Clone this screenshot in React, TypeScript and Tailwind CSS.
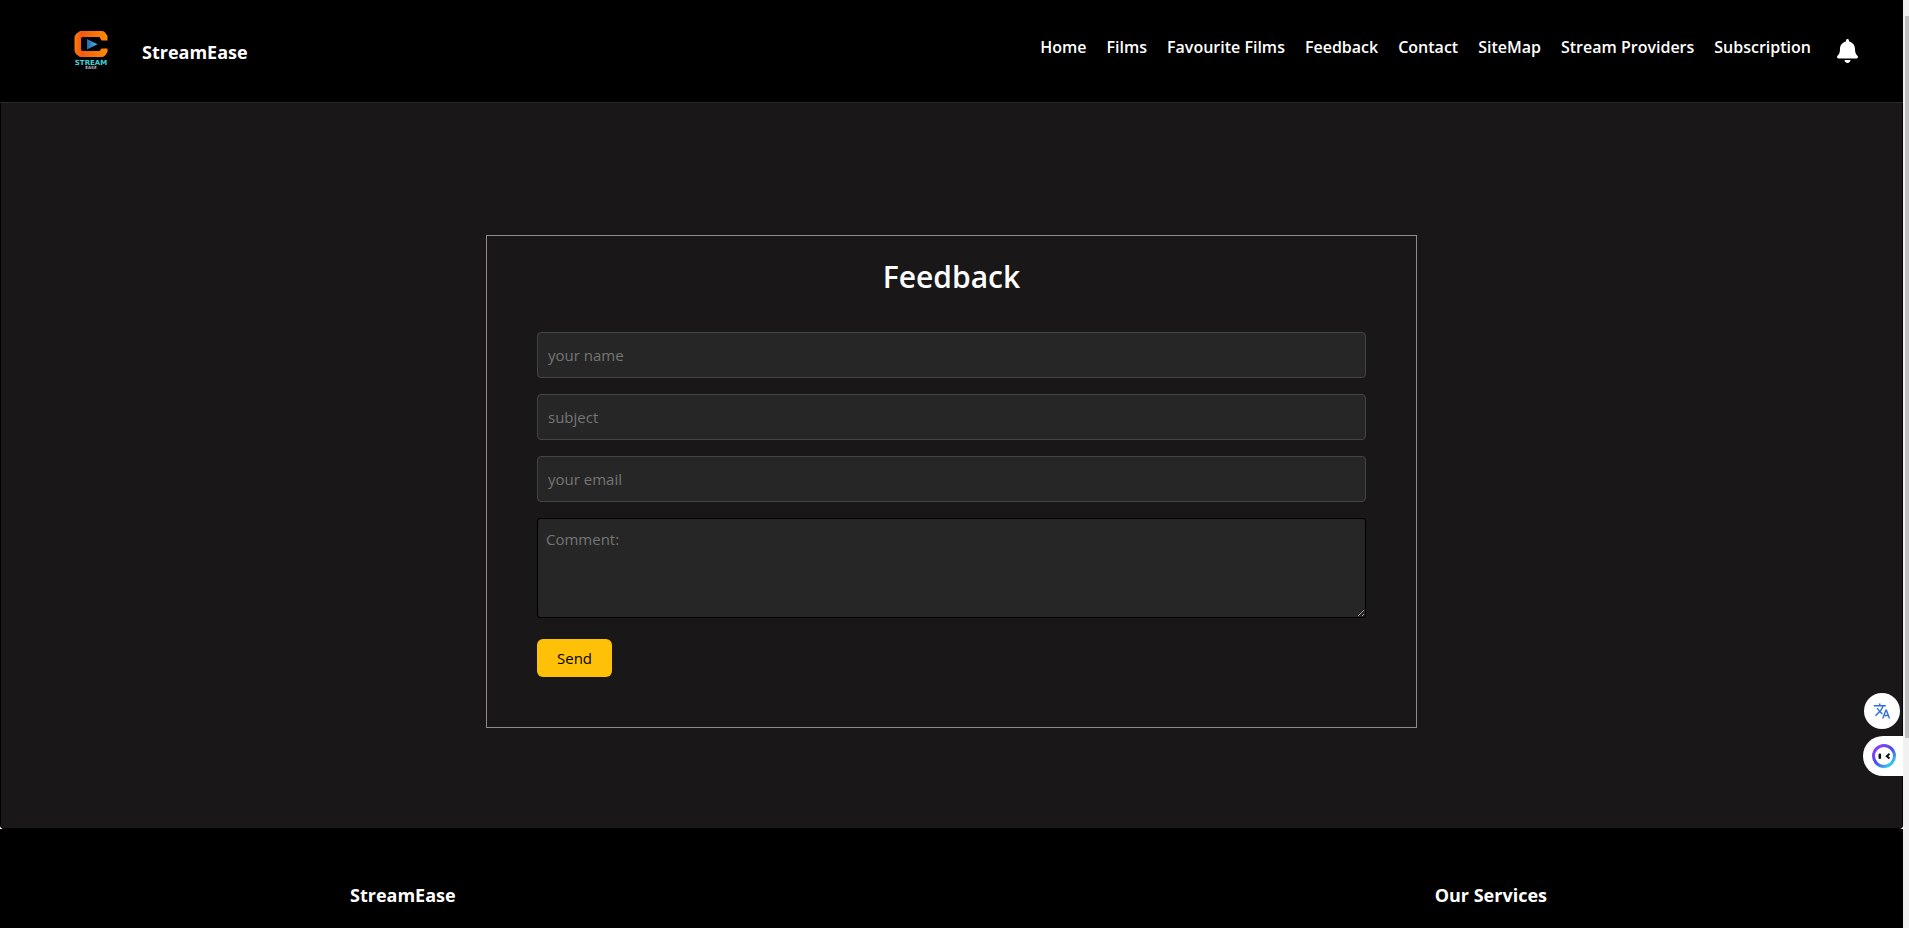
import { FaBell } from "react-icons/fa";
import { MdTranslate } from "react-icons/md";

const links = [
  "Home",
  "Films",
  "Favourite Films",
  "Feedback",
  "Contact",
  "SiteMap",
  "Stream Providers",
  "Subscription",
];

const fields = [
  { id: "name", type: "text", label: "your name" },
  { id: "subject", type: "text", label: "subject" },
  { id: "email", type: "email", label: "your email" },
];

function Logo() {
  return (
    <svg viewBox="0 0 60 60" className="size-[60px]" aria-hidden="true">
      <defs>
        <linearGradient id="logo-ring" x1="0" x2="1" y1="0" y2="0">
          <stop offset="0" stopColor="#ff7a0a" />
          <stop offset="0.22" stopColor="#f25a14" />
          <stop offset="1" stopColor="#ff8c00" />
        </linearGradient>
        <linearGradient id="logo-play" x1="0" x2="1" y1="0" y2="0">
          <stop offset="0" stopColor="#2563b8" />
          <stop offset="1" stopColor="#45c4e0" />
        </linearGradient>
      </defs>
      <path
        d="M20 11H42Q44 11 45.500 13L47.500 16V20.500H41.500L39.500 17H23Q21 17 21 19V29Q21 31 23 31H39.500L41.500 28.500H47.500V32L45.500 35Q44 37 42 37H20L16.500 34.500Q14.500 32.500 14.500 30V18Q14.500 15.500 16.500 13.500Z"
        fill="url(#logo-ring)"
      />
      <path d="M27 19L37.500 24.200L27 29.500Z" fill="url(#logo-play)" />
      <text x="31" y="45" textAnchor="middle" fontSize="7" fontWeight="700" fill="#3fd6dc" fontFamily="DejaVu Sans, sans-serif">
        STREAM
      </text>
      <text x="31" y="49" textAnchor="middle" fontSize="4" fontWeight="700" fill="#b8b8b8" fontFamily="DejaVu Sans, sans-serif">
        EASE
      </text>
    </svg>
  );
}

function AssistantFace() {
  return (
    <svg viewBox="0 0 24 24" className="size-6" aria-hidden="true">
      <defs>
        <linearGradient id="face-ring" x1="0.150" x2="0.850" y1="0.100" y2="0.900">
          <stop offset="0" stopColor="#8a3ff0" />
          <stop offset="0.5" stopColor="#4a4cf0" />
          <stop offset="1" stopColor="#35c8ee" />
        </linearGradient>
      </defs>
      <circle cx="12" cy="12" r="10.500" fill="#fff" stroke="url(#face-ring)" strokeWidth="3" />
      <rect x="6.500" y="9.500" width="2.600" height="5.500" rx="1.200" fill="#111" />
      <path d="M17.500 9.800L14.800 12.200L17.500 14.600" fill="none" stroke="#111" strokeWidth="2" />
    </svg>
  );
}

export default function App() {
  return (
    <div className="relative flex min-h-screen bg-white font-['Open_Sans','Noto_Sans',sans-serif] text-white">
      <div className="flex min-w-0 flex-1 flex-col">
        <header className="flex h-[103px] items-start justify-between border-b border-[#2a2828] bg-black pr-[45px] pl-[60px]">
          <a href="#home" className="flex items-center gap-[22px] pt-5">
            <Logo />
            <span className="pt-1 text-[18px] leading-6 font-bold">StreamEase</span>
          </a>
          <div className="flex items-start gap-[26px]">
            <nav className="flex gap-5 pt-[35px] text-base leading-6 font-semibold">
              {links.map((link) => (
                <a key={link} href="#page" className="whitespace-nowrap">
                  {link}
                </a>
              ))}
            </nav>
            <button type="button" aria-label="Notifications" className="mt-[39px]">
              <FaBell className="h-6 w-[21px]" />
            </button>
          </div>
        </header>

        <main className="flex justify-center rounded-b border-x border-b border-black bg-[#191717] pt-[132px] pb-[100px]">
          <form className="flex w-full max-w-[931px] flex-col items-start gap-4 border border-[#928a8a] px-[50px] pb-[50px]">
            <h1 className="w-full pt-[23px] pb-[21px] text-center text-[30px] leading-9 font-semibold">Feedback</h1>
            {fields.map((field) => (
              <input
                key={field.id}
                type={field.type}
                aria-label={field.label}
                placeholder={field.label}
                className="h-[46px] w-full rounded border border-[#444] bg-[#262626] px-2.5 text-[15px] placeholder:text-[#757575]"
              />
            ))}
            <textarea
              aria-label="Comment"
              placeholder="Comment:"
              className="h-[100px] w-full resize rounded-[3px] border border-black bg-[#262626] px-2 py-2 text-[15px] leading-6 placeholder:text-[#757575]"
            />
            <button
              type="submit"
              className="mt-[5px] h-[38px] w-[75px] rounded-md bg-[#ffc107] text-[15px] text-black"
            >
              Send
            </button>
          </form>
        </main>

        <footer className="flex flex-1 items-start justify-between bg-black pr-[356px] pl-[350px] pt-[54px] pb-2 text-[18px] leading-6 font-bold">
          <h2>StreamEase</h2>
          <h2>Our Services</h2>
        </footer>
      </div>

      <div className="w-1.5 shrink-0 bg-[#f1f1f1] pt-4 pl-0.5">
        <div className="h-[722px] bg-[#c1c1c1]" />
      </div>

      <div className="absolute top-[693px] right-1.5 flex flex-col items-end gap-[7px]">
        <button
          type="button"
          aria-label="Translate"
          className="mr-[3px] flex size-9 items-center justify-center rounded-full bg-white text-[#2f6fe6]"
        >
          <MdTranslate className="size-[18px]" />
        </button>
        <button type="button" aria-label="Assistant" className="flex h-10 w-10 items-center justify-center rounded-l-full bg-white pl-0.5">
          <AssistantFace />
        </button>
      </div>
    </div>
  );
}
